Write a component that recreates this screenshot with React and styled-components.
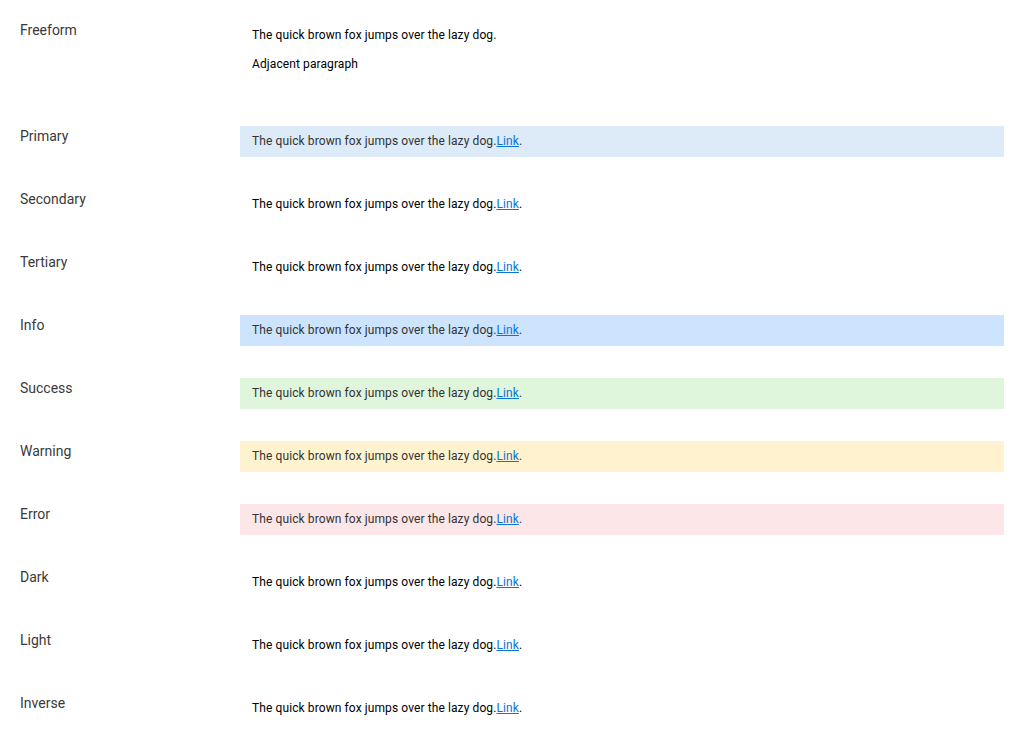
import React from "react";
import styled, { createGlobalStyle } from "styled-components";

const Global = createGlobalStyle`
  html, body { margin: 0; padding: 0; background: #fff; }
  body { font-family: Roboto, "Liberation Sans", sans-serif; }
`;

const Page = styled.div`
  padding: 20px 20px 0 20px;
  display: flex;
  flex-direction: column;
  gap: 32px;
`;

const Row = styled.div`
  display: grid;
  grid-template-columns: 220px 1fr;
  align-items: start;
`;

const Label = styled.div`
  font-size: 14px;
  line-height: 20px;
  color: #3a3a3a;
`;

const Banner = styled.div`
  padding: 8px 12px;
  font-size: 12px;
  line-height: 15px;
  letter-spacing: 0.1px;
  background: ${(p) => p.$bg || "transparent"};
  color: ${(p) => (p.$bg ? "#333" : "#000")};
`;

const Para = styled.p`
  margin: 0 0 14px 0;
`;

const Link = styled.a`
  color: #0b75d1;
  text-decoration: underline;
`;

const variants = [
  { name: "Primary", bg: "#ddeaf8" },
  { name: "Secondary" },
  { name: "Tertiary" },
  { name: "Info", bg: "#cce4fe" },
  { name: "Success", bg: "#dff5dc" },
  { name: "Warning", bg: "#fff3cf" },
  { name: "Error", bg: "#fde6e8" },
  { name: "Dark" },
  { name: "Light" },
  { name: "Inverse" },
];

export default function App() {
  return (
    <>
      <Global />
      <Page>
        <Row>
          <Label>Freeform</Label>
          <Banner>
            <Para>The quick brown fox jumps over the lazy dog.</Para>
            <Para>Adjacent paragraph</Para>
          </Banner>
        </Row>
        {variants.map((v) => (
          <Row key={v.name}>
            <Label>{v.name}</Label>
            <Banner $bg={v.bg}>
              The quick brown fox jumps over the lazy dog.<Link href="#">Link</Link>.
            </Banner>
          </Row>
        ))}
      </Page>
    </>
  );
}
